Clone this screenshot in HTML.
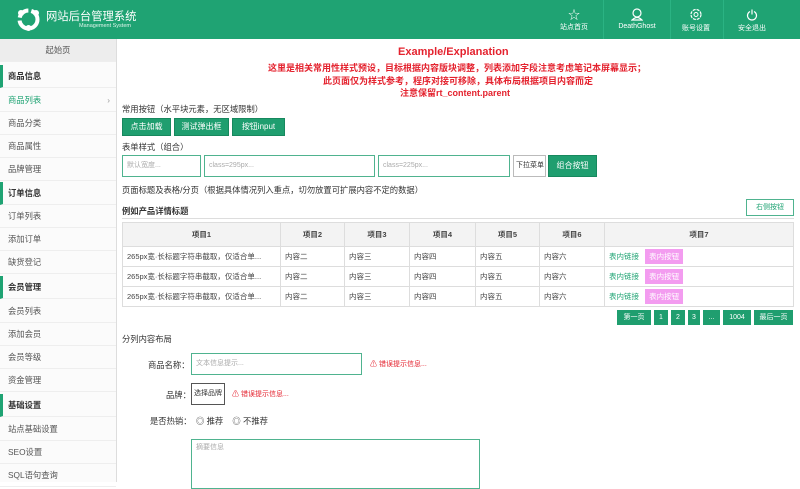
<!DOCTYPE html>
<html><head><meta charset="utf-8"><style>
*{margin:0;padding:0;box-sizing:border-box}
body{width:800px;height:482px;overflow:hidden;background:#fff;font-family:"Liberation Sans","Noto Sans CJK SC",sans-serif;font-size:8.3px;color:#333;position:relative}
.a{position:absolute}
#hd{left:0;top:0;width:800px;height:39px;background:#1fa373}
#sb{left:0;top:39px;width:117px;height:443px;background:#fbfbfb;border-right:1px solid #ddd}
.si{position:absolute;left:0;width:116px;height:23px;line-height:23px;padding-left:8px;border-bottom:1px solid #eee;color:#555}
.sh{font-weight:bold;color:#333;border-left:3px solid #1fa373;padding-left:5px}
.btn{position:absolute;background:#1f9e6f;color:#fff;text-align:center;border:1px solid #17885e;line-height:16px;font-size:8px}
.inp{position:absolute;border:1px solid #4fb38f;height:22px;line-height:20px;padding-left:4px;color:#aaa;font-size:7px}
table{border-collapse:collapse;position:absolute;left:122px;top:222px;width:672px}
td{border:1px solid #ddd;height:20px;padding-left:4px;font-size:7.5px;color:#444}
tr.h td{background:#f3f3f3;height:24px;text-align:center;font-weight:bold;padding:0}
.pg{position:absolute;top:310px;height:15px;background:#1f9e6f;color:#fff;font-size:7px;line-height:15px;text-align:center}
.red{color:#e4222e}
.hi{position:absolute;top:8px;color:#fff;font-size:7px;text-align:center;width:60px}
</style></head><body>
<div id="hd" class="a">
<svg class="a" style="left:16px;top:7px" width="25" height="25" viewBox="0 0 25 25"><circle cx="12.5" cy="12.5" r="9" fill="none" stroke="#fff" stroke-width="4" stroke-dasharray="12 3"/><circle cx="5" cy="6" r="3" fill="#fff"/><circle cx="20" cy="6" r="3" fill="#fff"/><circle cx="12.5" cy="21" r="3" fill="#fff"/></svg>
<div class="a" style="left:46px;top:8px;color:#fff;font-size:11.3px">网站后台管理系统</div>
<div class="a" style="left:79px;top:23px;color:#e0f5ec;font-size:5.5px">Management System</div>
<div class="a" style="left:603px;top:0;width:1px;height:39px;background:#2bb383"></div>
<div class="a" style="left:670px;top:0;width:1px;height:39px;background:#2bb383"></div>
<div class="a" style="left:723px;top:0;width:1px;height:39px;background:#2bb383"></div>
<div class="hi" style="left:544px"><div style="font-size:12px;line-height:14px">☆</div>站点首页</div>
<div class="hi" style="left:607px"><svg width="12" height="13" viewBox="0 0 12 13"><circle cx="6" cy="5" r="4" fill="none" stroke="#fff" stroke-width="1.2"/><path d="M1 12 Q6 7 11 12Z" fill="none" stroke="#fff" stroke-width="1.2"/></svg><br>DeathGhost</div>
<div class="hi" style="left:666px"><svg width="12" height="13" viewBox="0 0 12 12"><circle cx="6" cy="6" r="5" fill="none" stroke="#fff" stroke-width="1.2" stroke-dasharray="3 1"/><circle cx="6" cy="6" r="2" fill="none" stroke="#fff"/></svg><br>账号设置</div>
<div class="hi" style="left:722px"><svg width="12" height="13" viewBox="0 0 12 12"><path d="M4 3 A4.5 4.5 0 1 0 8 3 M6 1 V6" fill="none" stroke="#fff" stroke-width="1.2"/></svg><br>安全退出</div>
</div>
<div id="sb" class="a">
<div class="si" style="top:0;background:#ededed;text-align:center;padding:0">起始页</div>
<div class="si sh" style="top:26px">商品信息</div>
<div class="si" style="top:50px;color:#1fa373">商品列表<span style="float:right;margin-right:6px;color:#999">›</span></div>
<div class="si" style="top:73px">商品分类</div>
<div class="si" style="top:96px">商品属性</div>
<div class="si" style="top:119px">品牌管理</div>
<div class="si sh" style="top:143px">订单信息</div>
<div class="si" style="top:166px">订单列表</div>
<div class="si" style="top:189px">添加订单</div>
<div class="si" style="top:212px">缺货登记</div>
<div class="si sh" style="top:237px">会员管理</div>
<div class="si" style="top:261px">会员列表</div>
<div class="si" style="top:284px">添加会员</div>
<div class="si" style="top:307px">会员等级</div>
<div class="si" style="top:330px">资金管理</div>
<div class="si sh" style="top:355px">基础设置</div>
<div class="si" style="top:379px">站点基础设置</div>
<div class="si" style="top:402px">SEO设置</div>
<div class="si" style="top:425px">SQL语句查询</div>
</div>
<div class="a red" style="left:398px;top:46px;font-size:11px;font-weight:bold">Example/Explanation</div>
<div class="a red" style="left:268px;top:61px;font-size:9px;font-weight:bold">这里是相关常用性样式预设，目标根据内容版块调整，列表添加字段注意考虑笔记本屏幕显示；</div>
<div class="a red" style="left:323px;top:74px;font-size:9px;font-weight:bold">此页面仅为样式参考，程序对接可移除，具体布局根据项目内容而定</div>
<div class="a red" style="left:400px;top:86px;font-size:9px;font-weight:bold">注意保留rt_content.parent</div>
<div class="a" style="left:122px;top:103px">常用按钮（水平块元素，无区域限制）</div>
<div class="btn" style="left:122px;top:118px;width:49px">点击加载</div>
<div class="btn" style="left:174px;top:118px;width:55px">测试弹出框</div>
<div class="btn" style="left:232px;top:118px;width:53px">按钮input</div>
<div class="a" style="left:122px;top:141px">表单样式（组合）</div>
<div class="inp" style="left:122px;top:155px;width:79px">默认宽度...</div>
<div class="inp" style="left:204px;top:155px;width:171px">class=295px...</div>
<div class="inp" style="left:378px;top:155px;width:132px">class=225px...</div>
<div class="inp" style="left:513px;top:155px;width:33px;color:#333;border-color:#bbb;padding-left:2px">下拉菜单</div>
<div class="btn" style="left:548px;top:155px;width:49px;height:22px;line-height:20px">组合按钮</div>
<div class="a" style="left:122px;top:184px">页面标题及表格/分页（根据具体情况列入重点，切勿放置可扩展内容不定的数据）</div>
<div class="a" style="left:122px;top:205px;font-weight:bold">例如产品详情标题</div>
<div class="a" style="left:746px;top:199px;width:48px;height:17px;border:1px solid #4fb38f;color:#1fa373;text-align:center;line-height:15px;font-size:7px">右侧按钮</div>
<div class="a" style="left:122px;top:218px;width:672px;height:1px;background:#ddd"></div>
<table>
<tr class="h"><td style="width:158px">项目1</td><td style="width:64px">项目2</td><td style="width:65px">项目3</td><td style="width:66px">项目4</td><td style="width:64px">项目5</td><td style="width:65px">项目6</td><td>项目7</td></tr>
<tr><td>265px宽·长标题字符串截取，仅适合单...</td><td>内容二</td><td>内容三</td><td>内容四</td><td>内容五</td><td>内容六</td><td><span style="color:#1fa373">表内链接</span> <span style="background:#f39cf0;color:#fff;padding:3px 4px;margin-left:4px">表内按钮</span></td></tr>
<tr><td>265px宽·长标题字符串截取，仅适合单...</td><td>内容二</td><td>内容三</td><td>内容四</td><td>内容五</td><td>内容六</td><td><span style="color:#1fa373">表内链接</span> <span style="background:#f39cf0;color:#fff;padding:3px 4px;margin-left:4px">表内按钮</span></td></tr>
<tr><td>265px宽·长标题字符串截取，仅适合单...</td><td>内容二</td><td>内容三</td><td>内容四</td><td>内容五</td><td>内容六</td><td><span style="color:#1fa373">表内链接</span> <span style="background:#f39cf0;color:#fff;padding:3px 4px;margin-left:4px">表内按钮</span></td></tr>
</table>
<div class="pg" style="left:617px;width:34px">第一页</div>
<div class="pg" style="left:654px;width:14px">1</div>
<div class="pg" style="left:671px;width:14px">2</div>
<div class="pg" style="left:688px;width:12px">3</div>
<div class="pg" style="left:703px;width:17px">...</div>
<div class="pg" style="left:723px;width:28px">1004</div>
<div class="pg" style="left:754px;width:39px">最后一页</div>
<div class="a" style="left:122px;top:333px">分列内容布局</div>
<div class="a" style="left:148px;top:359px">商品名称：</div>
<div class="inp" style="left:191px;top:353px;width:171px">文本信息提示...</div>
<div class="a red" style="left:370px;top:359px;font-size:7px">⚠ 错误提示信息...</div>
<div class="a" style="left:166px;top:389px">品牌：</div>
<div class="a" style="left:191px;top:383px;width:34px;height:22px;border:1px solid #555;line-height:20px;text-align:center;font-size:7px">选择品牌</div>
<div class="a red" style="left:232px;top:389px;font-size:7px">⚠ 错误提示信息...</div>
<div class="a" style="left:150px;top:415px">是否热销：</div>
<div class="a" style="left:196px;top:415px">◎ 推荐 &nbsp;&nbsp;&nbsp;◎ 不推荐</div>
<div class="inp" style="left:191px;top:439px;width:289px;height:50px;padding-top:3px;line-height:10px">摘要信息</div>
</body></html>
